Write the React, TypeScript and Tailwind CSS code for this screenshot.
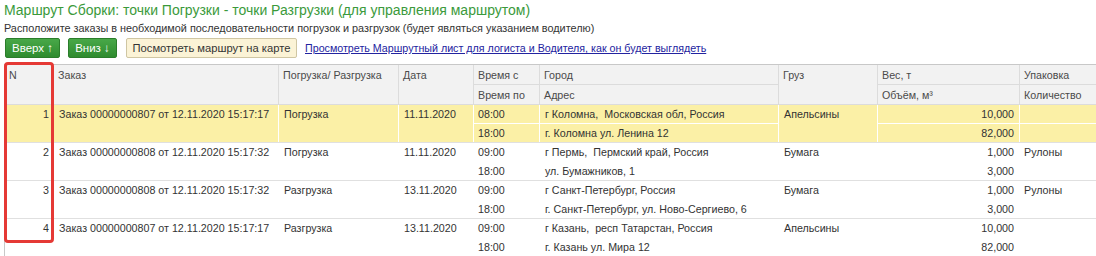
import React from "react";

const COLS = "grid grid-cols-[49px_225px_120px_75px_66px_239px_99px_142px_77px]";

type Row = {
  n: string;
  order: string;
  kind: string;
  date: string;
  t1: string;
  t2: string;
  city: string;
  addr: string;
  cargo: string;
  w: string;
  v: string;
  pack: string;
  qty: string;
  selected?: boolean;
};

const rows: Row[] = [
  { n: "1", order: "Заказ 00000000807 от 12.11.2020 15:17:17", kind: "Погрузка", date: "11.11.2020", t1: "08:00", t2: "18:00", city: "г Коломна,  Московская обл, Россия", addr: "г. Коломна ул. Ленина 12", cargo: "Апельсины", w: "10,000", v: "82,000", pack: "", qty: "", selected: true },
  { n: "2", order: "Заказ 00000000808 от 12.11.2020 15:17:32", kind: "Погрузка", date: "11.11.2020", t1: "09:00", t2: "18:00", city: "г Пермь,  Пермский край, Россия", addr: "ул. Бумажников, 1", cargo: "Бумага", w: "1,000", v: "3,000", pack: "Рулоны", qty: "" },
  { n: "3", order: "Заказ 00000000808 от 12.11.2020 15:17:32", kind: "Разгрузка", date: "13.11.2020", t1: "09:00", t2: "18:00", city: "г Санкт-Петербург, Россия", addr: "г. Санкт-Петербург, ул. Ново-Сергиево, 6", cargo: "Бумага", w: "1,000", v: "3,000", pack: "Рулоны", qty: "" },
  { n: "4", order: "Заказ 00000000807 от 12.11.2020 15:17:17", kind: "Разгрузка", date: "13.11.2020", t1: "09:00", t2: "18:00", city: "г Казань,  респ Татарстан, Россия", addr: "г. Казань ул. Мира 12", cargo: "Апельсины", w: "10,000", v: "82,000", pack: "", qty: "" },
];

function HeaderRow() {
  const cell = "border-r border-b border-[#dcdcdc] pl-[4px] whitespace-pre overflow-hidden leading-[20px]";
  return (
    <div className={`${COLS} grid-rows-[20px_20px] bg-[#f2f2f2] text-[#4a4a4a] border-t border-[#c8c8c8]`}>
      <div className={`${cell} col-start-1 row-start-1 row-span-2`}>N</div>
      <div className={`${cell} col-start-2 row-start-1 row-span-2`}>Заказ</div>
      <div className={`${cell} col-start-3 row-start-1 row-span-2`}>Погрузка/ Разгрузка</div>
      <div className={`${cell} col-start-4 row-start-1 row-span-2`}>Дата</div>
      <div className={`${cell} col-start-5 row-start-1`}>Время с</div>
      <div className={`${cell} col-start-6 row-start-1`}>Город</div>
      <div className={`${cell} col-start-7 row-start-1 row-span-2`}>Груз</div>
      <div className={`${cell} col-start-8 row-start-1`}>Вес, т</div>
      <div className={`${cell} col-start-9 row-start-1`}>Упаковка</div>
      <div className={`${cell} col-start-5 row-start-2`}>Время по</div>
      <div className={`${cell} col-start-6 row-start-2`}>Адрес</div>
      <div className={`${cell} col-start-8 row-start-2`}>Объём, м³</div>
      <div className={`${cell} col-start-9 row-start-2`}>Количество</div>
    </div>
  );
}

function BodyRow({ r }: { r: Row }) {
  const bg = r.selected ? "bg-[#fbf0a6]" : "bg-white";
  const cell = "border-r border-white whitespace-pre overflow-hidden leading-[19px]";
  const top = "border-b border-white";
  return (
    <div className={`${COLS} grid-rows-[19px_18px] ${bg} text-[#333333] border-b border-[#e0e0e0]`}>
      <div className={`${cell} col-start-1 row-start-1 row-span-2 text-right pr-[4px]`}>{r.n}</div>
      <div className={`${cell} col-start-2 row-start-1 row-span-2 pl-[5px]`}>{r.order}</div>
      <div className={`${cell} col-start-3 row-start-1 row-span-2 pl-[5px]`}>{r.kind}</div>
      <div className={`${cell} col-start-4 row-start-1 row-span-2 pl-[5px]`}>{r.date}</div>
      <div className={`${cell} ${top} col-start-5 row-start-1 pl-[4px]`}>{r.t1}</div>
      <div className={`${cell} ${top} col-start-6 row-start-1 pl-[5px]`}>{r.city}</div>
      <div className={`${cell} col-start-7 row-start-1 row-span-2 pl-[5px]`}>{r.cargo}</div>
      <div className={`${cell} ${top} col-start-8 row-start-1 text-right pr-[5px]`}>{r.w}</div>
      <div className={`${cell} ${top} col-start-9 row-start-1 pl-[4px]`}>{r.pack}</div>
      <div className={`${cell} col-start-5 row-start-2 pl-[4px]`}>{r.t2}</div>
      <div className={`${cell} col-start-6 row-start-2 pl-[5px]`}>{r.addr}</div>
      <div className={`${cell} col-start-8 row-start-2 text-right pr-[5px]`}>{r.v}</div>
      <div className={`${cell} col-start-9 row-start-2 pl-[4px]`}>{r.qty}</div>
    </div>
  );
}

export default function App() {
  return (
    <div className="w-[1096px] h-[256px] overflow-hidden bg-white pl-[4px] font-['Liberation_Sans',Arial,sans-serif] text-[10.7px]">
      <div className="text-[14px] leading-[20px] text-[#3b9a3b] whitespace-nowrap">
        Маршрут Сборки: точки Погрузки - точки Разгрузки (для управления маршрутом)
      </div>
      <div className="text-[10.85px] leading-[16px] text-[#333333] whitespace-nowrap">
        Расположите заказы в необходимой последовательности погрузок и разгрузок (будет являться указанием водителю)
      </div>
      <div className="mt-[2px] flex items-center h-[20px] whitespace-nowrap">
        <button className="h-[20px] w-[55px] ml-[1px] rounded-[2px] border border-[#2b7d2b] bg-gradient-to-b from-[#48a848] to-[#2f8c2f] text-white text-[11.5px] leading-[18px]">
          Вверх ↑
        </button>
        <button className="h-[20px] w-[49px] ml-[8px] rounded-[2px] border border-[#2b7d2b] bg-gradient-to-b from-[#48a848] to-[#2f8c2f] text-white text-[11.5px] leading-[18px]">
          Вниз ↓
        </button>
        <button className="h-[20px] w-[171px] ml-[9px] rounded-[2px] border border-[#cfc6a3] bg-[#fbf3d6] text-[#333333] text-[11.2px] leading-[18px]">
          Посмотреть маршрут на карте
        </button>
        <span className="ml-[8px] text-[#2323a0] underline">
          Просмотреть Маршрутный лист для логиста и Водителя, как он будет выглядеть
        </span>
      </div>
      <div className="relative mt-[6px] border-l border-[#c8c8c8]">
        <HeaderRow />
        {rows.map((r) => (
          <BodyRow key={r.n} r={r} />
        ))}
        <div className="absolute left-[-1px] top-[-2px] w-[50px] h-[181px] border-[3px] border-[#e53935] rounded-[4px]" />
      </div>
    </div>
  );
}
